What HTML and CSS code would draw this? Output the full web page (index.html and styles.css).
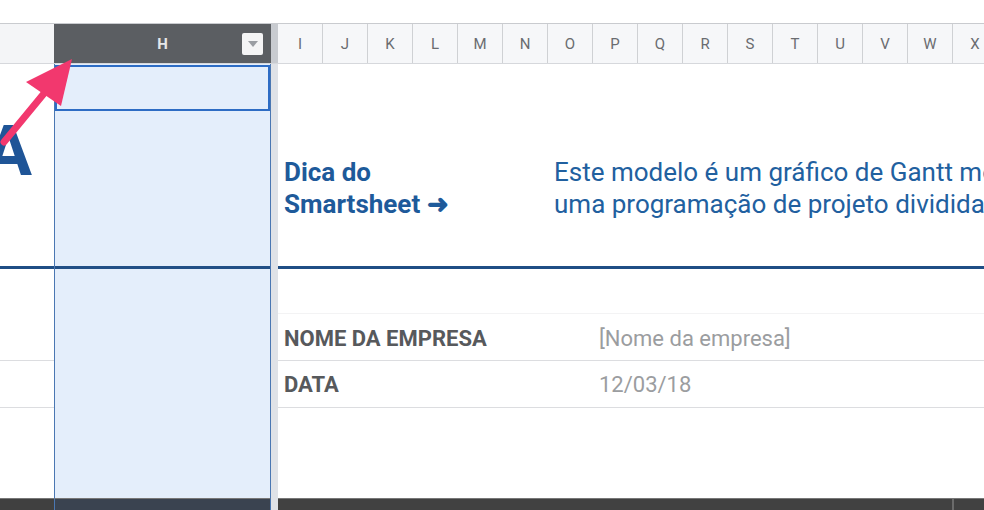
FILE: index.html
```html
<!DOCTYPE html>
<html lang="pt">
<head>
<meta charset="utf-8">
<link rel="stylesheet" href="styles.css">
</head>
<body>
<div class="page">
  <div class="topgap"></div>
  <div class="colheads">
    <div class="corner"></div>
    <div class="hhead"><span class="hletter">H</span><span class="dd"><svg width="12" height="8" viewBox="0 0 12 8"><path d="M1 1h10L6 7z" fill="#9a9da2"/></svg></span></div>
    <div class="band"></div>
    <div class="letters">
      <div class="col">I</div><div class="col">J</div><div class="col">K</div><div class="col">L</div><div class="col">M</div><div class="col">N</div><div class="col">O</div><div class="col">P</div><div class="col">Q</div><div class="col">R</div><div class="col">S</div><div class="col">T</div><div class="col">U</div><div class="col">V</div><div class="col">W</div><div class="col">X</div>
    </div>
  </div>
  <div class="grid">
    <!-- row 1 -->
    <div class="c left r1"><span class="bigA">A</span></div>
    <div class="c hcol r1"><div class="sel"></div></div>
    <div class="c bandc r1"></div>
    <div class="c main r1">
      <div class="tip">Dica do<br>Smartsheet ➜</div>
      <div class="desc">Este modelo é um gráfico de Gantt mostrando<br>uma programação de projeto dividida em fases</div>
    </div>
    <!-- thick line -->
    <div class="c left thick"></div>
    <div class="c hcol thick hthick"></div>
    <div class="c bandc"></div>
    <div class="c main thick"></div>
    <!-- row 2 -->
    <div class="c left r2"></div>
    <div class="c hcol"></div>
    <div class="c bandc"></div>
    <div class="c main r2"></div>
    <!-- row 3 -->
    <div class="c left r3"></div>
    <div class="c hcol"></div>
    <div class="c bandc"></div>
    <div class="c main r3 faint"><span class="lbl">NOME DA EMPRESA</span><span class="val">[Nome da empresa]</span></div>
    <!-- row 4 -->
    <div class="c left r4 line"></div>
    <div class="c hcol"></div>
    <div class="c bandc"></div>
    <div class="c main r4 line"><span class="lbl">DATA</span><span class="val">12/03/18</span></div>
    <!-- row 5 -->
    <div class="c left r5 line"></div>
    <div class="c hcol"></div>
    <div class="c bandc"></div>
    <div class="c main r5 line"></div>
    <!-- bottom bar -->
    <div class="c bar"></div>
    <div class="c bar hbar"></div>
    <div class="c bar bbar"></div>
    <div class="c bar mbar"><span class="barsep"></span></div>
  </div>
  <svg class="arrow" width="90" height="110" viewBox="0 50 90 110">
    <line x1="4" y1="142" x2="46" y2="91" stroke="#f2386e" stroke-width="7" stroke-linecap="round"/>
    <polygon points="72,59 26,82 61,106" fill="#f2386e"/>
  </svg>
</div>
</body>
</html>
```
FILE: styles.css
```css
* { box-sizing: border-box; }
html, body { margin: 0; padding: 0; background: #fff; }
body { font-family: Roboto, "Liberation Sans", Arial, sans-serif; }
.page { position: relative; width: 984px; height: 510px; overflow: hidden; }
.topgap { height: 23px; background: #fff; }
.colheads {
  display: flex; height: 41px;
  border-top: 1px solid #c9cbcf; border-bottom: 1px solid #d6d8dc;
}
.corner { width: 54px; flex: none; background: #f4f5f7; }
.hhead {
  width: 217px; flex: none; background: #5b5e62; position: relative;
  display: flex; align-items: center; justify-content: center;
}
.hletter { color: #e6e7e9; font-weight: 700; font-size: 15px; }
.dd {
  position: absolute; right: 8px; top: 9px; width: 21px; height: 22px;
  background: #f4f4f5; border-radius: 2px;
  display: flex; align-items: center; justify-content: center;
}
.band { width: 7px; flex: none; background: #c8cbd0; }
.letters { display: flex; flex: 1; min-width: 0; overflow: hidden; background: #f6f7f9; }
.col {
  width: 45px; flex: none; border-right: 1px solid #cfd1d4;
  display: flex; align-items: center; justify-content: center;
  color: #6a6c70; font-size: 15px;
}
.grid {
  display: grid;
  grid-template-columns: 54px 217px 7px 706px;
  grid-template-rows: 202px 3px 44px 47px 47px 91px 12px;
}
.c { position: relative; }
.left { background: #fff; overflow: hidden; }
.hcol {
  background: #e4eefb;
  border-left: 1px solid #4a77b2; border-right: 1px solid #4a77b2;
}
.bandc { background: #dfe2e7; }
.main { background: #fff; overflow: hidden; }
.thick { background: #1f4e85; }
.hthick { background: #214f86; }
.line { border-top: 1px solid #dcdde0; }
.faint { border-top: 1px solid #f3f3f4; }
.sel {
  margin: 1px 0 0 0; height: 46px; border: 2px solid #2d6cc4;
}
.bigA {
  position: absolute; right: 22px; top: 52px;
  font-size: 70px; line-height: 70px; font-weight: 700; color: #1f5597;
}
.r1.main { display: flex; padding-top: 92px; font-size: 26px; line-height: 32px; white-space: nowrap; }
.tip { width: 270px; flex: none; padding-left: 6px; font-weight: 700; color: #1e5a9a; }
.desc { padding-left: 6px; color: #21609f; }
.r3, .r4 { display: flex; align-items: center; white-space: nowrap; font-size: 22px; }
.r3 { padding-top: 2px; }
.lbl { width: 315px; flex: none; padding-left: 6px; font-weight: 700; color: #57595c; }
.val { padding-left: 6px; color: #9b9da0; }
.bar { background: #404040; border-top: 1px solid #777; }
.hbar { background: #3a4350; border-left: 1px solid #4a77b2; border-right: 1px solid #4a77b2; }
.bbar { background: #dfe2e7; border-top: none; }
.mbar { background: #414141; }
.barsep { position: absolute; left: 674px; top: 0; width: 2px; height: 12px; background: #6b6b6b; }
.arrow { position: absolute; left: 0; top: 50px; }
```
